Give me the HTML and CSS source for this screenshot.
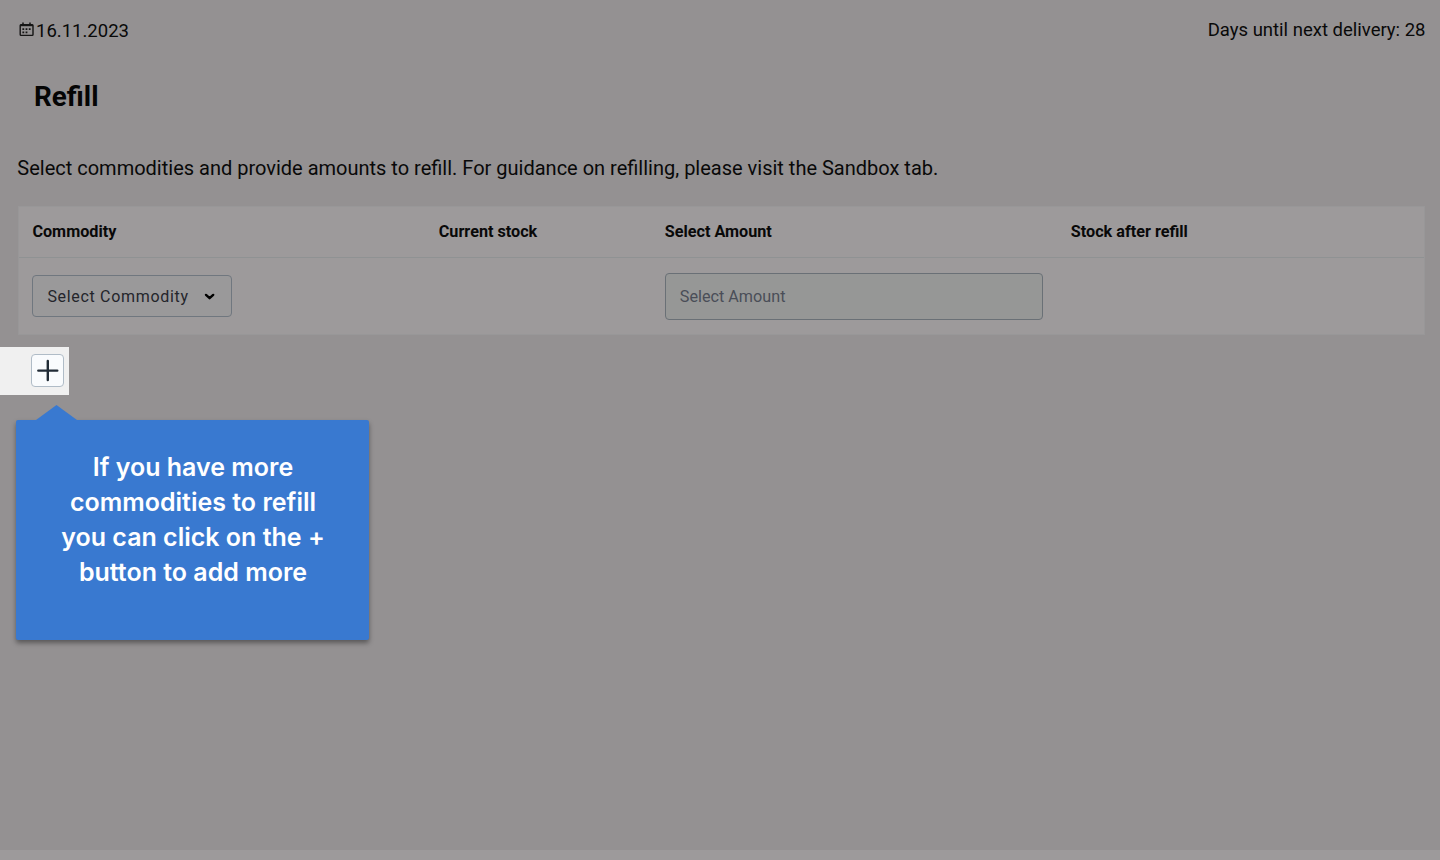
FILE: index.html
```html
<!DOCTYPE html>
<html lang="en">
<head>
<meta charset="utf-8">
<title>Refill</title>
<link rel="stylesheet" href="styles.css">
</head>
<body>
<main class="page">
  <header class="topbar">
    <div class="date">
      <svg class="calendar" width="15" height="15" viewBox="0 0 15 15" fill="none" stroke="currentColor">
        <rect x="1.2" y="2.6" width="12.8" height="10.8" rx="0.8" stroke-width="1.4"/>
        <path d="M4 0.4v2.4M11 0.4v2.4" stroke-width="1.5"/>
        <path d="M1.2 3.4H14" stroke-width="1.6"/>
        <path d="M3.4 7.2h1.8M6.6 7.2h1.8M9.8 7.2h1.8M3.4 10.4h1.8M6.6 10.4h1.8" stroke-width="1.8"/>
      </svg>
      <span>16.11.2023</span>
    </div>
    <div class="delivery">Days until next delivery: 28</div>
  </header>
  <h1 class="title">Refill</h1>
  <p class="intro">Select commodities and provide amounts to refill. For guidance on refilling, please visit the Sandbox tab.</p>
  <section class="table">
    <div class="row head">
      <div>Commodity</div><div>Current stock</div><div>Select Amount</div><div>Stock after refill</div>
    </div>
    <div class="row body">
      <div>
        <button class="select"><span>Select Commodity</span>
          <svg width="12" height="8" viewBox="0 0 12 8" fill="none" stroke="#000" stroke-width="2.4" stroke-linecap="round" stroke-linejoin="round"><path d="M2 2.9L5.6 6.2L9.2 2.9"/></svg>
        </button>
      </div>
      <div></div>
      <div><div class="amount">Select Amount</div></div>
      <div></div>
    </div>
  </section>
  <div class="spotlight">
    <button class="add" aria-label="Add commodity">
      <svg width="23" height="23" viewBox="0 0 23 23" stroke="#212b36" stroke-width="2.4" stroke-linecap="round"><path d="M11.8 2v19M2.3 11.6h19"/></svg>
    </button>
  </div>
  <aside class="tip">
    <svg class="arrow" width="42" height="15" viewBox="0 0 42 15"><path d="M0 15L20.5 0L41 15z" fill="#3979d0"/></svg>
    <p class="bubble">If you have more<br>commodities to refill<br>you can click on the +<br>button to add more</p>
  </aside>
</main>
<footer class="footer"></footer>
</body>
</html>
```
FILE: styles.css
```css
* { box-sizing: border-box; }
body {
  margin: 0;
  height: 860px;
  overflow: hidden;
  display: flex;
  flex-direction: column;
  background: #949192;
  color: #090909;
  font-family: Roboto, sans-serif;
}
.page { flex: 1; min-height: 0; }
.topbar {
  display: flex;
  justify-content: space-between;
  align-items: center;
  height: 61px;
  padding: 0 14.5px 0 19px;
  font-size: 18.5px;
}
.date { display: flex; align-items: center; gap: 2px; }
.delivery { padding-bottom: 2px; }
.calendar { margin-bottom: 2px; color: #151515; }
.title {
  margin: 0;
  padding: 15px 0 0 34px;
  font-size: 27.8px;
  line-height: 41px;
  font-weight: 700;
  color: #050505;
}
.intro {
  margin: 0;
  padding: 36px 0 0 17.3px;
  font-size: 20px;
  line-height: 30px;
}
.table {
  margin: 23px 15px 0 18px;
  height: 129px;
  background: #9d9a9b;
  border: 1px solid #989798;
}
.row {
  display: grid;
  grid-template-columns: 406.4px 226px 406px 1fr;
  align-items: center;
  padding-left: 13.4px;
}
.head {
  height: 51px;
  padding-bottom: 2px;
  border-bottom: 1px solid #8f9293;
  font-size: 16.2px;
  font-weight: 700;
}
.body { height: 76px; }
.select {
  display: flex;
  align-items: center;
  justify-content: space-between;
  width: 199.4px;
  height: 42px;
  padding: 0 14.4px 0 14px;
  border: 1px solid #70777f;
  border-radius: 4px;
  background: #9a999a;
  color: #24252b;
  font: 400 16px Roboto, sans-serif;
  letter-spacing: 0.68px;
}
.amount {
  display: flex;
  align-items: center;
  width: 378px;
  height: 47px;
  padding-left: 14px;
  border: 1px solid #6a7076;
  border-radius: 4px;
  background: #969796;
  color: #4a4e58;
  font-size: 16.2px;
}
.spotlight {
  width: 69px;
  height: 48px;
  margin-top: 12px;
  padding: 7px 0 0 31px;
  background: #f0f0f0;
}
.add {
  display: flex;
  align-items: center;
  justify-content: center;
  width: 33px;
  height: 33px;
  padding: 0;
  border: 1px solid #b0bcc7;
  border-radius: 4px;
  background: #f9fbfd;
}
.tip { width: 353px; margin: 10px 0 0 16px; }
.arrow { display: block; margin-left: 20px; }
.bubble {
  margin: 0;
  height: 220px;
  padding: 30px 0 0 1px;
  border-radius: 2px;
  background: #3979d0;
  box-shadow: 0 3px 5px rgba(0, 0, 0, 0.4);
  color: #fff;
  font: 600 25px/35px Inter, sans-serif;
  text-align: center;
}
.footer { height: 10px; background: #9d9a9b; }
```
